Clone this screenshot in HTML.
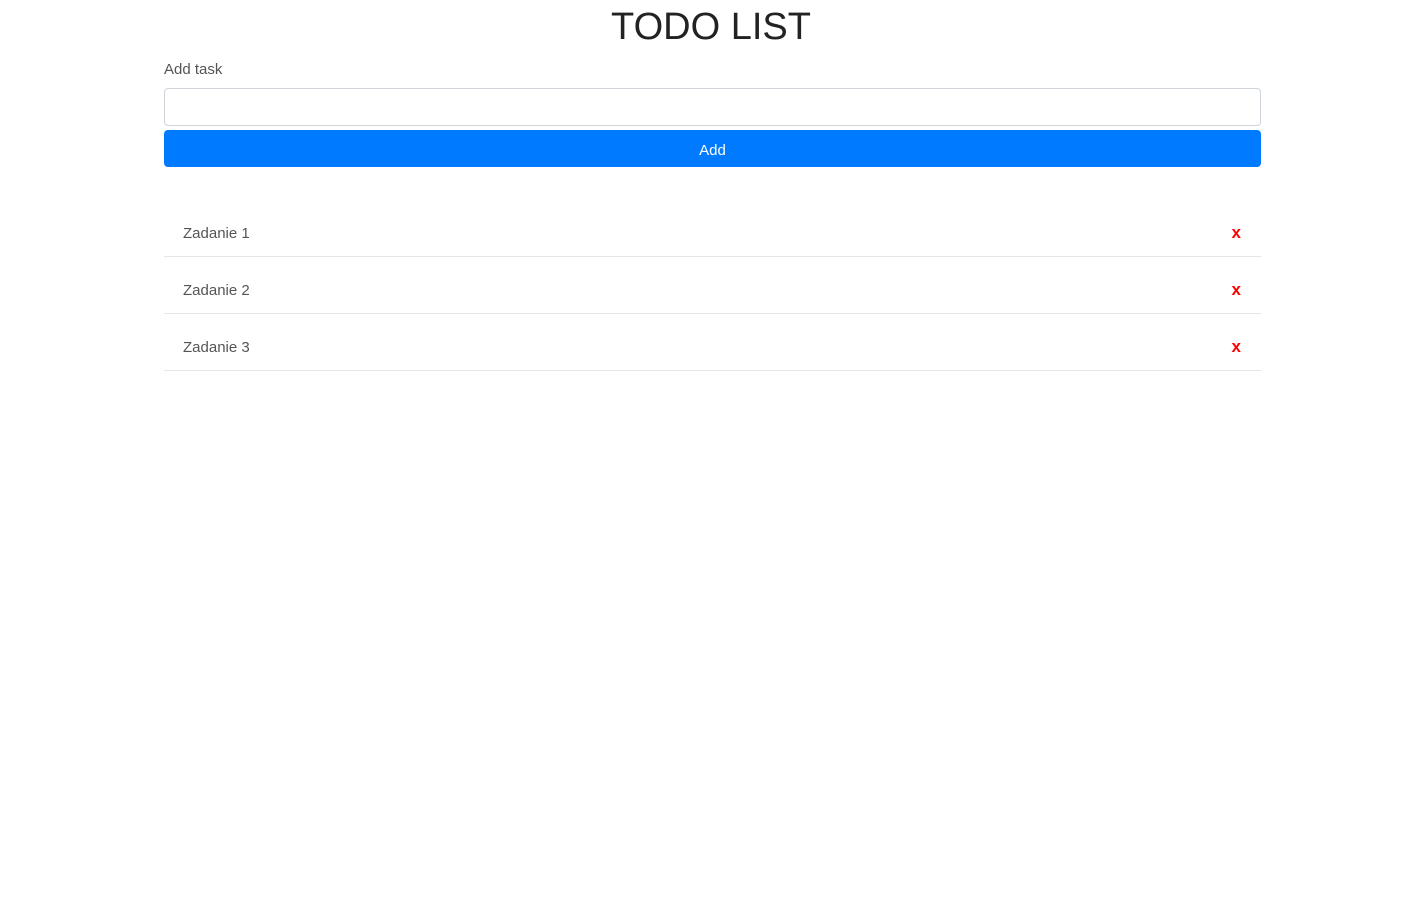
<!DOCTYPE html>
<html><head><meta charset="utf-8"><style>
body{margin:0;background:#fff;font-family:"Liberation Sans",sans-serif;color:#212529;}
.c{position:absolute;left:164px;width:1097px;}
h1{position:absolute;left:0;width:1422px;top:1px;margin:0;text-align:center;font-size:38px;font-weight:normal;line-height:52px;color:#222;}
.lbl{top:60px;font-size:15px;color:#555;line-height:20px;}
.inp{top:88px;height:36px;border:1px solid #ced4da;border-radius:4px;width:1095px;}
.btn{top:130px;height:37px;background:#007bff;border-radius:4px;color:#fff;text-align:center;line-height:41px;font-size:15px;}
.row{height:56px;border-bottom:1px solid #e6e6e6;font-size:15px;color:#555;line-height:62px;}
.row span{position:absolute;left:19px;top:3px;}
.row b{position:absolute;right:20px;top:2px;color:#f00;font-size:17px;}
</style></head><body>
<h1>TODO LIST</h1>
<div class="c lbl">Add task</div>
<div class="c inp"></div>
<div class="c btn">Add</div>
<div class="c row" style="top:200px"><span>Zadanie 1</span><b>x</b></div>
<div class="c row" style="top:257px"><span>Zadanie 2</span><b>x</b></div>
<div class="c row" style="top:314px"><span>Zadanie 3</span><b>x</b></div>
</body></html>
